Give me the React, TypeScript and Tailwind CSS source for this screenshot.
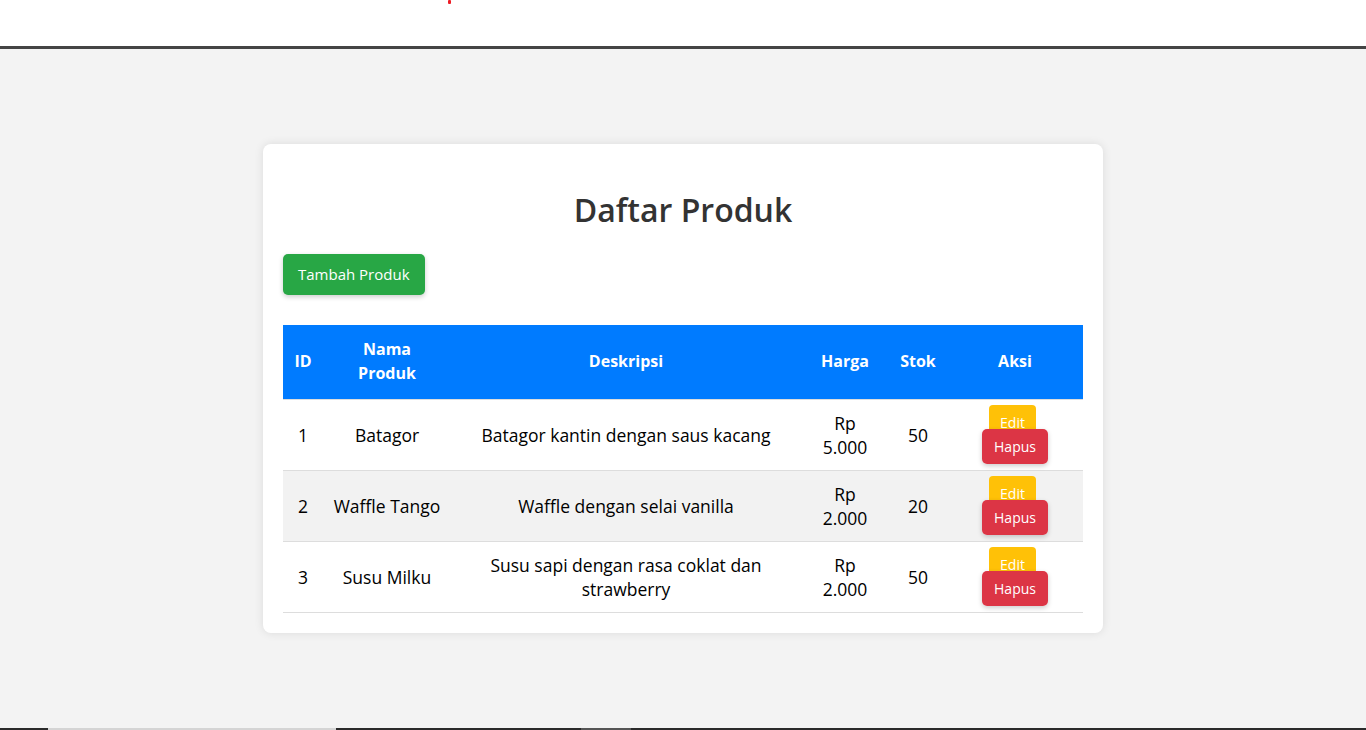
const products = [
  { id: 1, name: "Batagor", desc: "Batagor kantin dengan saus kacang", price: "Rp 5.000", stock: 50 },
  { id: 2, name: "Waffle Tango", desc: "Waffle dengan selai vanilla", price: "Rp 2.000", stock: 20 },
  { id: 3, name: "Susu Milku", desc: "Susu sapi dengan rasa coklat dan strawberry", price: "Rp 2.000", stock: 50 },
];

export default function App() {
  return (
    <div className="flex h-[730px] flex-col bg-white font-['Open_Sans',sans-serif]">
      <div className="h-[46px] bg-white pl-[448px]">
        <span className="block h-[4px] w-[3px] rounded-[1px] bg-[#ee1c25]" />
      </div>
      <div className="h-[3px] bg-[#444]" />

      <main className="flex flex-1 items-center justify-center bg-[#f3f3f3]">
        <div className="w-[840px] rounded-lg bg-white p-5 shadow-[0_0_10px_rgba(0,0,0,0.1)]">
          <h2 className="mt-[22px] mb-5 text-center text-[32px] leading-[48px] font-semibold text-[#333]">
            Daftar Produk
          </h2>

          <button className="rounded-[5px] bg-[#28a745] px-[15px] py-[10px] text-[15px] leading-[21px] text-white shadow-[0_2px_5px_rgba(0,0,0,0.2)]">
            Tambah Produk
          </button>

          <table className="mt-[30px] w-full table-fixed border-collapse text-[17.5px] leading-6 text-black">
            <colgroup>
              <col className="w-[40px]" />
              <col className="w-[128px]" />
              <col className="w-[350px]" />
              <col className="w-[88px]" />
              <col className="w-[58px]" />
              <col className="w-[136px]" />
            </colgroup>
            <thead>
              <tr className="bg-[#007bff] text-[16px] text-white">
                <th className="border-b border-[#ddd] px-2 pt-[12px] pb-[14px] font-bold">ID</th>
                <th className="border-b border-[#ddd] px-[14px] pt-[12px] pb-[14px] font-bold">Nama Produk</th>
                <th className="border-b border-[#ddd] px-3 pt-[12px] pb-[14px] font-bold">Deskripsi</th>
                <th className="border-b border-[#ddd] px-2 pt-[12px] pb-[14px] font-bold">Harga</th>
                <th className="border-b border-[#ddd] px-1 pt-[12px] pb-[14px] font-bold">Stok</th>
                <th className="border-b border-[#ddd] px-3 pt-[12px] pb-[14px] font-bold">Aksi</th>
              </tr>
            </thead>
            <tbody>
              {products.map((p, i) => (
                <tr key={p.id} className={i === 1 ? "bg-[#f2f2f2]" : "bg-white"}>
                  <td className="border-b border-[#ddd] px-2 py-[11px] text-center">{p.id}</td>
                  <td className="border-b border-[#ddd] px-2 py-[11px] text-center">{p.name}</td>
                  <td className="border-b border-[#ddd] px-3 py-[11px] text-center">{p.desc}</td>
                  <td className="border-b border-[#ddd] px-4 py-[11px] text-center">{p.price}</td>
                  <td className="border-b border-[#ddd] px-2 py-[11px] text-center">{p.stock}</td>
                  <td className="border-b border-[#ddd] px-3 py-[11px] text-center text-[14px]">
                    <a href="#" className="mr-[5px] rounded bg-[#ffc107] px-[11px] py-2 text-white">
                      Edit
                    </a>{" "}
                    <a href="#" className="rounded-[5px] bg-[#dc3545] px-3 py-2 text-white shadow-[0_2px_5px_rgba(0,0,0,0.2)]">
                      Hapus
                    </a>
                  </td>
                </tr>
              ))}
            </tbody>
          </table>
        </div>
      </main>

      <div className="flex h-[2px] bg-[#2a2a2a]">
        <div className="w-[48px]" />
        <div className="w-[288px] bg-[#d4d4d4]" />
        <div className="w-[245px]" />
        <div className="w-[50px] bg-[#555]" />
      </div>
    </div>
  );
}
